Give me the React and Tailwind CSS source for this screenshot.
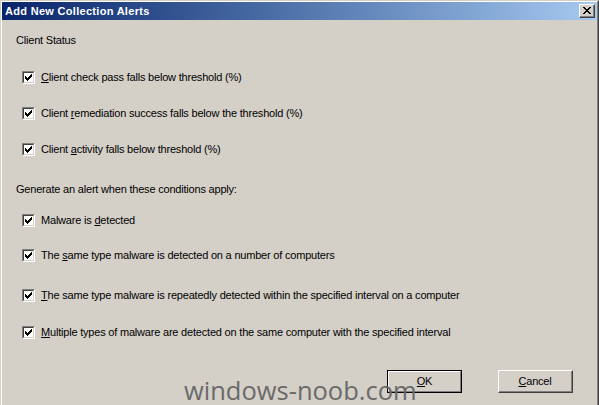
import React from 'react';

const font = { fontFamily: '"Liberation Sans", Arial, sans-serif' };

// classic 3D checkbox with a tick
const CheckBox = () => (
  <div className="w-[13px] h-[13px] shrink-0 border border-t-[#808080] border-l-[#808080] border-b-white border-r-white">
    <div className="w-full h-full flex items-center justify-center bg-white border border-t-[#404040] border-l-[#404040] border-b-[#D4D0C8] border-r-[#D4D0C8]">
      <svg width="7" height="7" viewBox="0 0 7 7" shapeRendering="crispEdges">
        <path d="M0 2h1v1h1v1h1v-1h1v-1h1v-1h1v-1h1v3h-1v1h-1v1h-1v1h-1v1h-1v-1h-1v-1h-1z" fill="#000" />
      </svg>
    </div>
  </div>
);

const Row = ({ className, children }) => (
  <div className={`flex items-center h-[13px] pl-[6px] gap-[6px] ${className}`}>
    <CheckBox />
    <span className="leading-[13px] whitespace-nowrap">{children}</span>
  </div>
);

const CloseIcon = () => (
  <svg width="8" height="7" viewBox="0 0 8 7" shapeRendering="crispEdges">
    <path
      d="M0 0h2v1h-2zM6 0h2v1h-2zM1 1h2v1h-2zM5 1h2v1h-2zM2 2h4v1h-4zM3 3h2v1h-2zM2 4h4v1h-4zM1 5h2v1h-2zM5 5h2v1h-2zM0 6h2v1h-2zM6 6h2v1h-2z"
      fill="#000"
    />
  </svg>
);

export default function App() {
  return (
    <div
      style={font}
      className="relative w-[599px] h-[405px] overflow-hidden bg-[#D4D0C8] text-[11px] tracking-[-0.2px] text-black border-t border-l border-r border-t-[#D4D0C8] border-l-[#D4D0C8] border-r-[#404040]"
    >
      <div className="h-full border-t border-l border-r border-t-white border-l-white border-r-[#808080]">
        {/* title bar */}
        <div className="h-[18px] flex items-center justify-between pl-[3px] pr-[2px] bg-linear-to-r from-[#0A246A] to-[#A6CAF0]">
          <span className="text-white font-bold leading-[18px] tracking-[0.3px]">Add New Collection Alerts</span>
          <div className="w-[16px] h-[14px] border border-t-white border-l-white border-b-[#404040] border-r-[#404040] bg-[#D4D0C8]">
            <div className="w-full h-full flex items-center justify-center border-b border-r border-b-[#808080] border-r-[#808080]">
              <CloseIcon />
            </div>
          </div>
        </div>

        <div className="pl-[14px] flex flex-col">
          <p className="mt-[14px] leading-[13px]">Client Status</p>
          <Row className="mt-[24px]"><u>C</u>lient check pass falls below threshold (%)</Row>
          <Row className="mt-[23px]">Client <u>r</u>emediation success falls below the threshold (%)</Row>
          <Row className="mt-[23px]">Client <u>a</u>ctivity falls below threshold (%)</Row>

          <p className="mt-[27px] leading-[13px]">Generate an alert when these conditions apply:</p>
          <Row className="mt-[18px]">Malware is <u>d</u>etected</Row>
          <Row className="mt-[22px]">The <u>s</u>ame type malware is detected on a number of computers</Row>
          <Row className="mt-[27px]"><u>T</u>he same type malware is repeatedly detected within the specified interval on a computer</Row>
          <Row className="mt-[24px]"><u>M</u>ultiple types of malware are detected on the same computer with the specified interval</Row>

          <div className="mt-[31px] flex justify-end gap-[36px] pr-[24px]">
            <button className="w-[75px] h-[23px] border border-black bg-[#D4D0C8] p-0">
              <div className="w-full h-full flex items-center justify-center border border-t-white border-l-white border-b-[#808080] border-r-[#808080]">
                <span><u>O</u>K</span>
              </div>
            </button>
            <button className="w-[75px] h-[23px] border border-t-white border-l-white border-b-[#404040] border-r-[#404040] bg-[#D4D0C8] p-0">
              <div className="w-full h-full flex items-center justify-center border-b border-r border-b-[#808080] border-r-[#808080]">
                <span><u>C</u>ancel</span>
              </div>
            </button>
          </div>
        </div>
      </div>

      {/* watermark */}
      <div
        style={{ fontFamily: '"Open Sans", sans-serif' }}
        className="absolute left-[183px] top-[376px] text-[25.5px] leading-[26px] tracking-normal text-[#6a6a6a] pointer-events-none whitespace-nowrap"
      >
        windows-noob.com
      </div>
    </div>
  );
}
